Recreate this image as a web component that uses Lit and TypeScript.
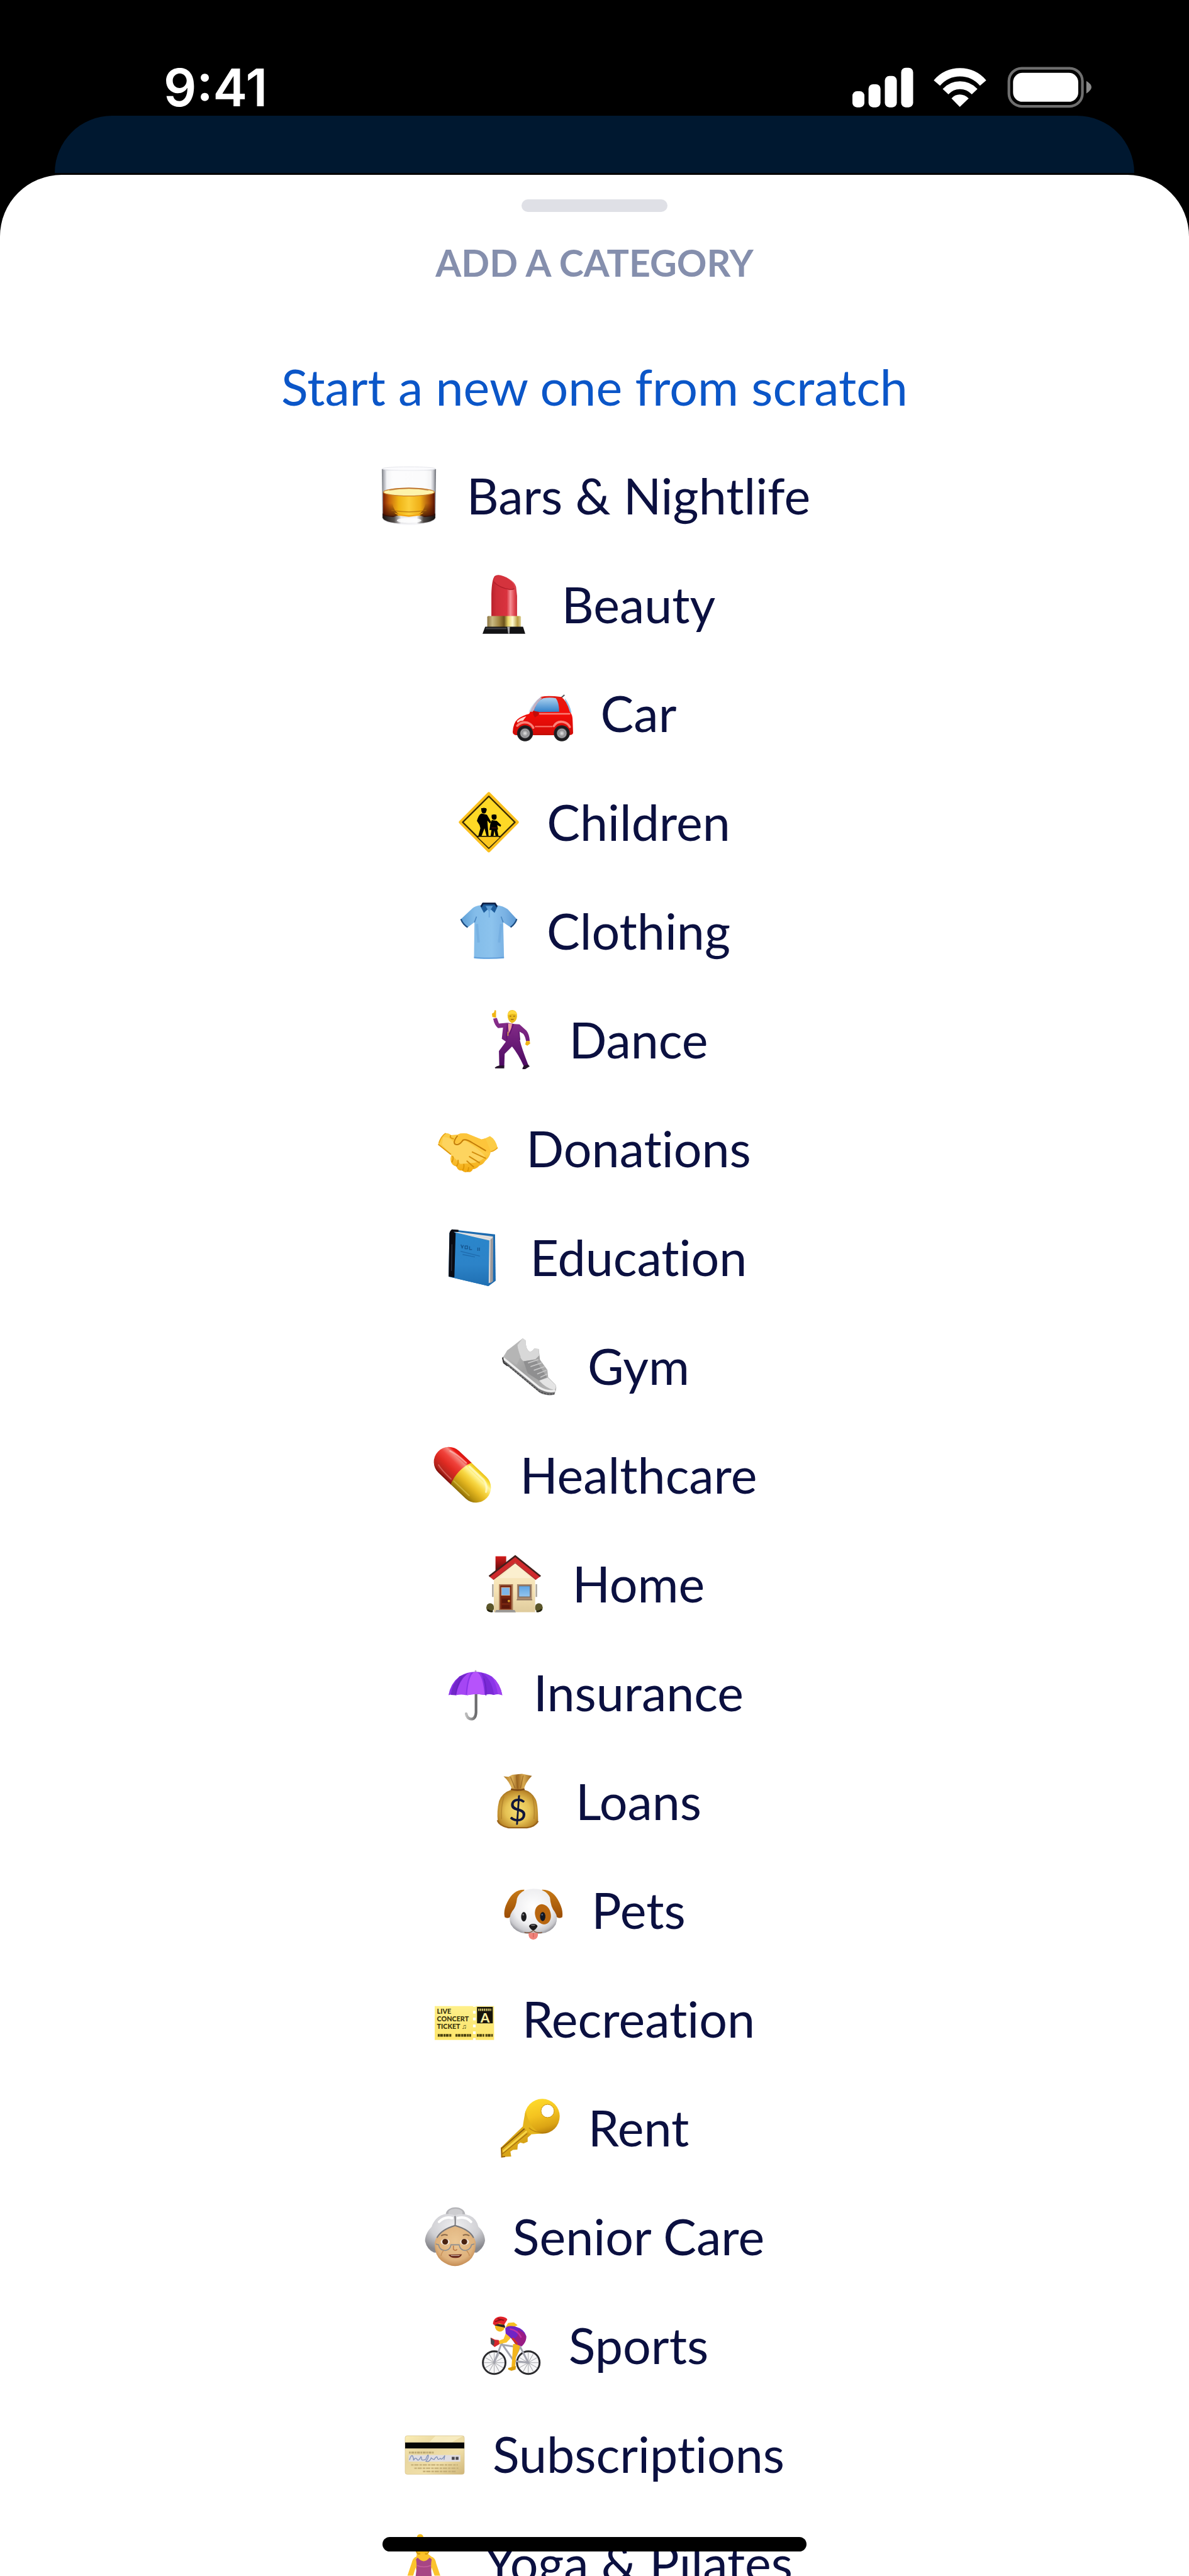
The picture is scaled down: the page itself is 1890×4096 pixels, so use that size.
import { LitElement, html, svg, css, TemplateResult } from "lit";
import { customElement } from "lit/decorators.js";

interface Category {
  name: string;
  view: string;
  art: TemplateResult;
}

const glass = svg`
  <defs>
    <linearGradient id="g-side"><stop offset="0" stop-color="#7d8086"/><stop offset=".07" stop-color="#d9dadf"/><stop offset=".2" stop-color="#f6f6f9"/><stop offset=".8" stop-color="#f3f3f6"/><stop offset=".94" stop-color="#d4d5da"/><stop offset="1" stop-color="#6b6e75"/></linearGradient>
    <linearGradient id="g-liq"><stop offset="0" stop-color="#7d1f04"/><stop offset=".12" stop-color="#c9660c"/><stop offset=".3" stop-color="#efb415"/><stop offset=".5" stop-color="#fccf3b"/><stop offset=".72" stop-color="#efae17"/><stop offset=".9" stop-color="#a44a0a"/><stop offset="1" stop-color="#5a1203"/></linearGradient>
    <linearGradient id="g-dark" x1="0" y1="0" x2="0" y2="1"><stop offset="0" stop-color="#3a0a00" stop-opacity="0"/><stop offset="1" stop-color="#3a0a00" stop-opacity=".85"/></linearGradient>
    <linearGradient id="g-base"><stop offset="0" stop-color="#1b1412"/><stop offset=".22" stop-color="#55504f"/><stop offset=".35" stop-color="#e8e8ea"/><stop offset=".65" stop-color="#f4f4f6"/><stop offset=".78" stop-color="#4c4745"/><stop offset="1" stop-color="#15100f"/></linearGradient>
  </defs>
  <path d="M73 84Q205 62 337 84L334 322Q322 356 205 356T76 322Z" fill="url(#g-side)"/>
  <ellipse cx="205" cy="82" rx="130" ry="9" fill="#fbfbfd" stroke="#e3e4ea" stroke-width="3"/>
  <rect x="95" y="92" width="220" height="90" fill="#fff" opacity=".65"/>
  <path d="M77 300H333V322Q318 350 205 352 92 350 77 322Z" fill="url(#g-base)"/>
  <path d="M79 196H331V300Q320 312 270 312H140Q90 312 79 300Z" fill="url(#g-liq)"/>
  <path d="M79 250H125Q130 290 160 306L128 318 79 312Z" fill="url(#g-dark)"/>
  <path d="M331 250H285Q280 290 250 306L282 318 331 312Z" fill="url(#g-dark)"/>
  <path d="M120 285Q205 300 290 285" fill="none" stroke="#b06a08" stroke-width="5" opacity=".7"/>
  <path d="M134 296Q205 322 276 296 262 314 205 316 148 314 134 296Z" fill="#f3a313"/>
  <ellipse cx="205" cy="196" rx="124" ry="19" fill="#fdf3ab" stroke="#c77c28" stroke-width="4"/>
  <path d="M110 186Q205 168 300 186" fill="none" stroke="#b4672a" stroke-width="6" opacity=".6"/>
  <ellipse cx="206" cy="334" rx="60" ry="12" fill="#fff" opacity=".8"/>`;

const lipstick = svg`
  <defs>
    <linearGradient id="l-red"><stop offset="0" stop-color="#b8222c"/><stop offset=".2" stop-color="#ce2e38"/><stop offset=".6" stop-color="#d9323e"/><stop offset=".74" stop-color="#f58f95"/><stop offset=".88" stop-color="#e24d56"/><stop offset="1" stop-color="#c62a36"/></linearGradient>
    <linearGradient id="l-gold"><stop offset="0" stop-color="#8a7442"/><stop offset=".15" stop-color="#c9ba82"/><stop offset=".35" stop-color="#a08540"/><stop offset=".5" stop-color="#6b521b"/><stop offset=".62" stop-color="#ecd96c"/><stop offset=".75" stop-color="#fffbd0"/><stop offset=".9" stop-color="#b79a3e"/><stop offset="1" stop-color="#dccf95"/></linearGradient>
  </defs>
  <path d="M602 800V690Q604 620 618 603 640 588 690 618 715 632 722 655L727 700V800Z" fill="url(#l-red)"/>
  <path d="M616 610Q640 590 690 620 712 634 714 658 712 672 690 671 635 655 614 625Z" fill="#d5333d"/>
  <path d="M616 634Q640 660 690 668 706 670 714 664" fill="none" stroke="#b21f2a" stroke-width="4"/>
  <rect x="582" y="798" width="164" height="56" rx="5" fill="url(#l-gold)"/>
  <path d="M572 850H756L767 884H559Z" fill="#121214"/>
  <path d="M576 854H676V862H572Z" fill="#3c3d42"/><path d="M679 850L692 850 690 884H684Z" fill="#a7a7aa"/>`;

const car = svg`
  <defs>
    <linearGradient id="c-red" x1="0" y1="0" x2="0" y2="1"><stop offset="0" stop-color="#e21c14"/><stop offset=".45" stop-color="#f30c08"/><stop offset="1" stop-color="#cf0c08"/></linearGradient>
    <linearGradient id="c-win" x1="0" y1="0" x2="0" y2="1"><stop offset="0" stop-color="#aed3ef"/><stop offset="1" stop-color="#2f7fc9"/></linearGradient>
    <radialGradient id="c-hub"><stop offset="0" stop-color="#e6e6e6"/><stop offset=".4" stop-color="#8e8e90"/><stop offset=".62" stop-color="#4a4a4c"/><stop offset=".7" stop-color="#17171a"/><stop offset="1" stop-color="#232326"/></radialGradient>
  </defs>
  <path d="M934 1194L950 1180" stroke="#55555a" stroke-width="6"/>
  <path d="M952 1196Q976 1226 984 1266L960 1268Z" fill="#8fc0e8"/>
  <path d="M698 1360Q700 1316 722 1298 745 1280 778 1272 800 1215 836 1189 870 1182 935 1190 962 1210 976 1262 990 1274 990 1310L992 1366Q988 1376 970 1376H715Q698 1374 698 1360Z" fill="url(#c-red)"/>
  <path d="M800 1256Q818 1206 846 1196 880 1190 908 1196 924 1216 924 1262L815 1264Z" fill="url(#c-win)"/>
  <path d="M776 1262Q795 1220 832 1192L842 1194Q812 1220 798 1262Z" fill="#b9d8ef" opacity=".8"/>
  <path d="M830 1272H975" stroke="#fb8a80" stroke-width="8" stroke-linecap="round" opacity=".9"/>
  <path d="M718 1308Q735 1290 764 1284L748 1306Q735 1304 722 1316Z" fill="#ffd9cf"/>
  <path d="M720 1330Q742 1308 772 1316 792 1324 798 1340M898 1332Q914 1306 944 1312 968 1318 976 1336" fill="none" stroke="#fb8178" stroke-width="11" stroke-linecap="round"/>
  <path d="M806 1334H892" stroke="#f7675f" stroke-width="7"/>
  <path d="M806 1372H888" stroke="#c21008" stroke-width="6"/>
  <path d="M796 1258L824 1262 822 1280 806 1290 798 1276Z" fill="#c30c0a"/>
  <circle cx="758" cy="1367" r="39" fill="url(#c-hub)"/><circle cx="937" cy="1367" r="39" fill="url(#c-hub)"/>
  <circle cx="758" cy="1367" r="20" fill="none" stroke="#a5a5a8" stroke-width="5"/><circle cx="937" cy="1367" r="20" fill="none" stroke="#a5a5a8" stroke-width="5"/>`;

const crossing = svg`
  <defs><linearGradient id="s-y" x1="0" y1="0" x2="0" y2="1"><stop offset="0" stop-color="#fbc621"/><stop offset="1" stop-color="#fcb91a"/></linearGradient></defs>
  <path d="M257 66L396 206 257 346 118 206Z" fill="url(#s-y)" stroke="#fbc01d" stroke-width="14" stroke-linejoin="round"/>
  <path d="M257 80L384 206 257 333 130 206Z" fill="#fed926" stroke="#3a2c06" stroke-width="7" stroke-linejoin="round"/>
  <path d="M205 280H310L257 330Z" fill="#fbc61f"/>
  <ellipse cx="233" cy="150" rx="12" ry="14"/><path d="M220 138H244L248 148H220Z"/>
  <path d="M222 164Q208 168 199 200L212 220 216 236 206 272H222L236 236 246 272H256L252 228 250 198 262 212 268 204 248 170Z"/>
  <ellipse cx="283" cy="181" rx="12" ry="13"/><path d="M271 170H294V182H271Z"/>
  <path d="M272 196Q264 206 262 232L260 244H270L266 272H280L284 246 290 272H304L298 244 302 240 298 220 314 228 317 220 296 200Z"/>
  <path d="M200 275H312" stroke="#1c1503" stroke-width="6"/>
  <path d="M270 234H296" stroke="#c32f14" stroke-width="3" opacity=".5"/>`;

const shirt = svg`
  <defs><linearGradient id="t-b"><stop offset="0" stop-color="#5e9fd6"/><stop offset=".25" stop-color="#83bce9"/><stop offset=".55" stop-color="#8cc3ed"/><stop offset=".8" stop-color="#79b1e3"/><stop offset="1" stop-color="#5b98d3"/></linearGradient></defs>
  <path d="M212 608Q185 612 172 622L114 676Q124 702 147 716L180 692 178 868Q250 874 324 868L320 692 356 716Q378 700 386 676L342 628Q320 612 290 608 250 630 212 608Z" fill="url(#t-b)"/>
  <path d="M114 676Q124 702 147 716M386 676Q378 700 356 716" fill="none" stroke="#1d4c80" stroke-width="7"/>
  <path d="M180 692L190 664M320 692L310 664" stroke="#4a86c0" stroke-width="5" fill="none"/>
  <path d="M192 700L200 790M310 700L300 790" stroke="#6ca7dc" stroke-width="12" opacity=".5"/>
  <path d="M178 862Q250 870 324 862" stroke="#5a97d8" stroke-width="4" fill="none"/>
  <path d="M218 598H282L292 616 278 646 252 622 226 646 210 616Z" fill="#1d5c9b"/>
  <path d="M212 616L222 600H280L290 616" fill="none" stroke="#0c1e45" stroke-width="8"/>
  <path d="M234 612H270L252 642Z" fill="#5d9bd2"/><path d="M252 628V668" stroke="#6aa6dc" stroke-width="5"/>`;

const dancer = svg`
  <defs><linearGradient id="d-s" x1="0" y1="0" x2="0" y2="1"><stop offset="0" stop-color="#8b2f8d"/><stop offset="1" stop-color="#4c0a62"/></linearGradient></defs>
  <path d="M270 1150L268 1134 278 1128 282 1116 288 1118 288 1154Z" fill="#f0b414"/>
  <path d="M274 1158L292 1154 302 1182 344 1178 378 1184 402 1186 436 1216 Q450 1234 452 1266L434 1268Q430 1244 420 1232L400 1220 404 1262 Q412 1300 446 1386L424 1392Q396 1330 366 1294 L330 1330 328 1390H304L302 1316 336 1270 316 1256 322 1202 298 1204Q280 1190 274 1158Z" fill="url(#d-s)"/>
  <path d="M346 1182L366 1182 362 1206 350 1230Z" fill="#f1a3a0"/>
  <path d="M344 1184L338 1240 342 1262M372 1186L354 1234" stroke="#641370" stroke-width="5" fill="none"/>
  <path d="M346 1222V1242" stroke="#e3b93a" stroke-width="4"/>
  <path d="M400 1220L404 1262" stroke="#561068" stroke-width="4"/>
  <path d="M344 1140Q346 1116 368 1116 392 1118 390 1148 388 1172 366 1180 344 1172 344 1140Z" fill="#eabb1c"/>
  <path d="M346 1136Q352 1116 374 1118 390 1124 390 1140 370 1128 346 1142Z" fill="#ffd93f"/>
  <path d="M354 1146H362M372 1146H380M360 1162H374" stroke="#9c6a0b" stroke-width="4"/>
  <path d="M434 1268L452 1266 454 1280 440 1290 430 1284Z" fill="#f0b414"/>
  <path d="M282 1396Q290 1388 304 1386H328V1400H284ZM418 1396L424 1386 444 1382 452 1390 430 1404 416 1404Z" fill="#24122b"/>`;

const handshake = svg`
  <defs><linearGradient id="h-y" x1="0" y1="0" x2="0" y2="1"><stop offset="0" stop-color="#fbcc45"/><stop offset=".5" stop-color="#fccb45"/><stop offset="1" stop-color="#f2a90f"/></linearGradient></defs>
  <path d="M71 204Q78 168 108 150 124 150 134 160L164 158Q182 148 212 152L282 180Q302 176 324 164 352 180 361 222 350 236 328 240 322 268 300 286 290 302 272 308 258 324 240 326 232 344 214 338 200 344 188 332 168 334 160 312 140 308 134 290 128 270 136 256 112 234 71 204Z" fill="url(#h-y)"/>
  <path d="M134 160L164 158Q182 148 212 152L282 180 302 176 328 240Q322 250 312 246 260 214 198 186 180 208 154 204 148 190 170 166Z" fill="#fdc53b"/>
  <path d="M96 170Q130 166 150 200 190 200 200 184 270 226 300 262 286 284 250 294L180 300 136 256 90 206Z" fill="#fdd45f"/>
  <path d="M166 162Q144 190 152 202 172 214 192 184 206 176 240 198L304 236" fill="none" stroke="#c27b08" stroke-width="6"/>
  <path d="M134 160Q122 172 148 178M72 204L134 254" fill="none" stroke="#e09a10" stroke-width="6"/>
  <path d="M238 242L302 272M224 264L272 294M212 286L244 314" stroke="#d18c0c" stroke-width="6" stroke-linecap="round"/>
  <path d="M140 262Q150 268 138 292M168 280Q172 298 160 312M196 300Q200 316 190 332M220 316Q220 328 214 338" fill="none" stroke="#dd9708" stroke-width="6"/>
  <path d="M108 150Q86 164 76 198M328 240Q350 234 361 220" fill="none" stroke="#e9a313" stroke-width="5"/>`;

const book = svg`
  <defs><linearGradient id="b-b" x1="0" y1="0" x2="0" y2="1"><stop offset="0" stop-color="#2a86cb"/><stop offset=".6" stop-color="#2c83c8"/><stop offset="1" stop-color="#1f6fb2"/></linearGradient></defs>
  <path d="M128 618L338 642 341 868 306 894 112 848 116 634Z" fill="#1c6bb0"/>
  <path d="M140 628L328 652 326 872 306 880V676L138 640Z" fill="#d5d3d3"/>
  <path d="M316 668L328 656V870L314 880Z" fill="#9d999a"/>
  <path d="M150 632L322 658M146 637L316 666" stroke="#f2f1f0" stroke-width="3"/>
  <path d="M134 630L310 672 306 894 130 852Z" fill="url(#b-b)"/>
  <path d="M116 636Q122 616 134 618L160 620V630H136L146 636 140 852 112 847Z" fill="#0a0b12"/>
  <path d="M128 690L126 820" stroke="#3d4452" stroke-width="3"/>
  <path d="M172 692L178 708 184 694M192 698H204V712H192ZM214 700V716H226M254 706V722M262 706V722" fill="none" stroke="#16558f" stroke-width="4"/>
  <path d="M170 724L264 748M180 740L240 752" stroke="#1f6aac" stroke-width="4"/>`;

const shoe = svg`
  <defs><linearGradient id="n-g" x1="0" y1="0" x2="1" y2="1"><stop offset="0" stop-color="#c9c9c9"/><stop offset=".5" stop-color="#a1a1a1"/><stop offset="1" stop-color="#b8b8b8"/></linearGradient></defs>
  <path d="M388 1238Q384 1252 394 1266L570 1412Q610 1430 640 1420L648 1396 600 1400 400 1232Z" fill="#777778"/>
  <path d="M390 1238L410 1206 486 1146 500 1156Q500 1200 520 1212 536 1208 542 1196L564 1198 570 1250 606 1300 610 1336 646 1372Q654 1388 644 1404 600 1410 560 1384Z" fill="url(#n-g)"/>
  <path d="M486 1146L500 1156Q500 1200 520 1212 536 1208 542 1196L564 1198 566 1230 548 1248 490 1258Q466 1240 460 1180Z" fill="#d8d8d8"/>
  <path d="M410 1206L458 1172Q462 1200 476 1236L456 1276 400 1232Z" fill="#b5b5b5"/>
  <path d="M490 1258L548 1250 604 1336 566 1352 510 1316Z" fill="#8f8f90"/>
  <path d="M512 1266L562 1250M524 1284L578 1266M540 1302L592 1284M556 1320L602 1302M572 1336L606 1320" stroke="#c9c9c9" stroke-width="5"/>
  <path d="M566 1352L608 1338 646 1374Q650 1390 640 1398 600 1390 566 1352Z" fill="#e4e4e4"/>
  <path d="M392 1244L566 1386Q604 1410 644 1402" fill="none" stroke="#efefef" stroke-width="11"/>
  <path d="M390 1258L566 1404Q600 1424 640 1416" fill="none" stroke="#4e4e50" stroke-width="6" stroke-dasharray="9 6"/>
  <path d="M388 1240L394 1266 412 1280" fill="none" stroke="#38383a" stroke-width="6"/>`;

const pill = svg`
  <defs>
    <linearGradient id="p-r" x1="0" y1="1" x2="0" y2="0"><stop offset="0" stop-color="#7a0d08"/><stop offset=".12" stop-color="#b1241c"/><stop offset=".4" stop-color="#e02a22"/><stop offset=".62" stop-color="#f0423b"/><stop offset=".8" stop-color="#f4887f"/><stop offset=".9" stop-color="#ef1b16"/><stop offset="1" stop-color="#d21612"/></linearGradient>
    <linearGradient id="p-y" x1="0" y1="1" x2="0" y2="0"><stop offset="0" stop-color="#8a6a0a"/><stop offset=".15" stop-color="#b8920f"/><stop offset=".4" stop-color="#e6b921"/><stop offset=".6" stop-color="#f8d844"/><stop offset=".78" stop-color="#fff59b"/><stop offset=".9" stop-color="#f9df3a"/><stop offset="1" stop-color="#e9bd18"/></linearGradient>
  </defs>
  <g transform="rotate(43.5 231 219)">
    <path d="M140 146H225V292H140A73 73 0 0 1 140 146Z" fill="url(#p-r)"/>
    <path d="M222 146H322A73 73 0 0 1 322 292H222Q194 219 222 146Z" fill="url(#p-y)"/>
    <path d="M108 176Q140 164 205 164" stroke="#ffc5bf" stroke-width="7" fill="none" stroke-linecap="round" opacity=".65"/>
    <path d="M228 166H324Q356 172 372 200" stroke="#fffbcf" stroke-width="10" fill="none" stroke-linecap="round" opacity=".75"/>
    <path d="M114 264Q140 272 205 272" stroke="#f4a79d" stroke-width="6" fill="none" stroke-linecap="round" opacity=".45"/>
    <path d="M222 270H324" stroke="#f1e07c" stroke-width="6" fill="none" stroke-linecap="round" opacity=".4"/>
  </g>`;

const house = svg`
  <defs>
    <linearGradient id="o-w" x1="0" y1="0" x2="0" y2="1"><stop offset="0" stop-color="#f9eac6"/><stop offset=".6" stop-color="#f5e2b4"/><stop offset="1" stop-color="#dfcb9c"/></linearGradient>
    <linearGradient id="o-c" x1="0" y1="0" x2="0" y2="1"><stop offset="0" stop-color="#d31b1b"/><stop offset="1" stop-color="#5d0c0c"/></linearGradient>
    <linearGradient id="o-g" x1="0" y1="0" x2="0" y2="1"><stop offset="0" stop-color="#5ea4e3"/><stop offset="1" stop-color="#95c5ef"/></linearGradient>
  </defs>
  <ellipse cx="389" cy="864" rx="19" ry="21" fill="#5b562a"/><ellipse cx="626" cy="864" rx="19" ry="21" fill="#5b562a"/>
  <path d="M376 874Q388 886 402 882M614 882Q630 886 640 872" stroke="#25230e" stroke-width="8" fill="none"/>
  <path d="M402 750V812M614 750V812" stroke="#a7a197" stroke-width="7"/>
  <rect x="415" y="614" width="52" height="70" fill="url(#o-c)"/>
  <path d="M407 886V704L511 626 608 704V886Z" fill="url(#o-w)"/>
  <path d="M432 720L511 650 590 720Z" fill="#fbefcf"/>
  <path d="M384 712L511 614 634 712 612 728 511 644 404 728Z" fill="#cf2a2c"/>
  <path d="M384 712L511 613 634 712" fill="none" stroke="#42201c" stroke-width="8"/>
  <path d="M404 728L511 646 612 728" fill="none" stroke="#a3282a" stroke-width="4"/>
  <rect x="432" y="750" width="68" height="126" fill="#a87754"/><rect x="438" y="756" width="54" height="116" fill="#76240f"/>
  <rect x="444" y="766" width="40" height="38" fill="#7db5e8" stroke="#d9b698" stroke-width="3"/>
  <path d="M446 820H484V842H446ZM446 852H484V868H446Z" fill="#5c180a"/><circle cx="480" cy="832" r="6" fill="#d59a2b"/>
  <path d="M418 876H508L514 887H412Z" fill="#9a9896"/>
  <rect x="520" y="750" width="72" height="74" fill="#a98a70"/><rect x="528" y="758" width="56" height="54" fill="url(#o-g)" stroke="#7c6758" stroke-width="4"/>
  <path d="M518 826H594" stroke="#8c7460" stroke-width="5"/>`;

const umbrella = svg`
  <defs><linearGradient id="u-h"><stop offset="0" stop-color="#bdbdbd"/><stop offset="1" stop-color="#6a6a6c"/></linearGradient></defs>
  <path d="M312 1280V1372Q310 1404 288 1404 268 1402 264 1378" fill="none" stroke="url(#u-h)" stroke-width="13" stroke-linecap="round"/>
  <path d="M310 1166V1180" stroke="#b7b4bd" stroke-width="8"/>
  <path d="M178 1288Q188 1230 232 1196 268 1174 310 1174 352 1174 388 1196 430 1230 440 1288 422 1280 400 1286 376 1280 354 1286 310 1278 268 1288 240 1280 214 1288 194 1282 178 1288Z" fill="#8b35e8"/>
  <path d="M310 1174Q276 1178 268 1288 310 1278 354 1286 344 1178 310 1174Z" fill="#b653fb"/>
  <path d="M290 1176Q236 1190 214 1288 240 1280 262 1288 268 1200 290 1176Z" fill="#a546f4"/>
  <path d="M335 1176Q352 1210 356 1286L376 1281 400 1286Q388 1204 335 1176Z" fill="#7a2ad6"/>
  <path d="M232 1196Q192 1238 190 1286L214 1288Q226 1220 270 1182Z" fill="#7227c9"/>
  <path d="M388 1196Q412 1232 418 1282L440 1288Q430 1230 388 1196Z" fill="#a042f0"/>
  <path d="M244 1200Q218 1236 214 1284M360 1290Q364 1240 350 1206" stroke="#6520bd" stroke-width="5" fill="none" opacity=".7"/>`;

const moneyBag = svg`
  <defs>
    <radialGradient id="m-b" cx=".5" cy=".55" r=".6"><stop offset="0" stop-color="#f6df72"/><stop offset=".5" stop-color="#e6c254"/><stop offset=".85" stop-color="#bd8a2b"/><stop offset="1" stop-color="#91611a"/></radialGradient>
    <linearGradient id="m-t"><stop offset="0" stop-color="#b27b26"/><stop offset=".3" stop-color="#dcb058"/><stop offset=".5" stop-color="#a06a22"/><stop offset=".7" stop-color="#d8a94f"/><stop offset="1" stop-color="#9a6722"/></linearGradient>
  </defs>
  <path d="M438 92L462 94 480 84 504 82 528 80 550 84 576 90Q544 122 536 158H480Q466 116 438 92Z" fill="url(#m-t)"/>
  <path d="M472 96L494 150M500 88L506 150M534 88L520 150" stroke="#8e5b1c" stroke-width="4" opacity=".7"/>
  <path d="M478 156Q430 172 416 212 404 260 410 312 420 334 462 344H552Q594 338 606 312 606 220 592 200 574 166 536 156Z" fill="url(#m-b)"/>
  <path d="M408 306Q416 332 462 342H552Q592 336 606 310" fill="none" stroke="#99631a" stroke-width="7"/>
  <path d="M474 154Q506 164 540 154" fill="none" stroke="#7d4a14" stroke-width="8"/>
  <path d="M440 190Q424 240 428 300M578 190Q592 240 586 300" stroke="#a97a25" stroke-width="5" fill="none" opacity=".6"/>
  <text x="507" y="312" text-anchor="middle" font-family="Lato, sans-serif" font-size="156" fill="#10163a">$</text>`;

const dog = svg`
  <defs>
    <radialGradient id="k-f" cx=".5" cy=".4" r=".62"><stop offset="0" stop-color="#fff"/><stop offset=".65" stop-color="#eeeef0"/><stop offset=".9" stop-color="#c9c9cd"/><stop offset="1" stop-color="#9c9ca2"/></radialGradient>
    <linearGradient id="k-e" x1="0" y1="0" x2="0" y2="1"><stop offset="0" stop-color="#c77a17"/><stop offset="1" stop-color="#9a4c05"/></linearGradient>
  </defs>
  <path d="M560 642Q506 640 476 704 456 744 464 776 488 788 502 762L534 700Z" fill="url(#k-e)"/>
  <path d="M645 642Q700 640 730 704 750 744 744 776 720 788 706 762L672 700Z" fill="url(#k-e)"/>
  <path d="M603 638Q664 638 684 680 688 728 708 750 726 776 712 812 690 850 640 856 603 860 566 856 516 850 494 812 480 776 500 748 520 726 524 684 542 640 603 638Z" fill="url(#k-f)"/>
  <ellipse cx="650" cy="762" rx="38" ry="50" transform="rotate(-16 650 762)" fill="#b8660f"/>
  <ellipse cx="557" cy="774" rx="13" ry="23" fill="#1d1d1f"/><ellipse cx="649" cy="773" rx="13" ry="22" fill="#131722"/>
  <circle cx="554" cy="764" r="4" fill="#8f8f92"/><circle cx="646" cy="764" r="4" fill="#5c6e8c"/>
  <path d="M580 852H626Q628 884 603 886 578 884 580 852Z" fill="#f08279"/><path d="M603 852V874" stroke="#d4605a" stroke-width="4"/>
  <path d="M560 850Q590 856 603 840 616 856 646 850" fill="none" stroke="#85614b" stroke-width="5"/>
  <path d="M582 820Q586 808 603 808 620 808 624 820 616 838 603 840 590 838 582 820Z" fill="#1c1a1b"/><ellipse cx="602" cy="815" rx="10" ry="3" fill="#77777a"/>`;

const ticket = svg`
  <defs><linearGradient id="r-y" x1="0" y1="0" x2="0" y2="1"><stop offset="0" stop-color="#fff08a"/><stop offset=".5" stop-color="#fbe878"/><stop offset="1" stop-color="#ffe76c"/></linearGradient></defs>
  <rect x="103" y="1206" width="289" height="165" fill="url(#r-y)"/>
  <path d="M296 1206V1371" stroke="#fff" stroke-width="13" stroke-dasharray="13 20" stroke-dashoffset="-24"/>
  <g font-family="Lato, sans-serif" font-weight="900" fill="#3b350f">
    <text x="114" y="1242" font-size="33">LIVE</text>
    <text x="114" y="1280" font-size="33">CONCERT</text>
    <text x="114" y="1317" font-size="33">TICKET ♫</text>
  </g>
  <path d="M118 1349H186M204 1349H280M308 1349H344M350 1349H386" stroke="#4a410e" stroke-width="13" stroke-dasharray="9 2 14 3"/>
  <rect x="309" y="1210" width="77" height="80" fill="#17140a"/>
  <path d="M315 1224H380" stroke="#d9cb6c" stroke-width="11" stroke-dasharray="6 3"/>
  <text x="348" y="1287" text-anchor="middle" font-family="Lato, sans-serif" font-weight="900" font-size="64" fill="#fdf0a0">A</text>`;

const key = svg`
  <defs>
    <linearGradient id="y-b" x1=".3" y1="0" x2=".6" y2="1"><stop offset="0" stop-color="#fedb2c"/><stop offset=".45" stop-color="#f4c320"/><stop offset=".8" stop-color="#dba414"/><stop offset="1" stop-color="#b87f0b"/></linearGradient>
    <linearGradient id="y-s" x1="0" y1="0" x2="1" y2="1"><stop offset="0" stop-color="#e0b01c"/><stop offset="1" stop-color="#d29c14"/></linearGradient>
  </defs>
  <path d="M612 226L650 268 632 284 632 304 612 312 596 308 584 318 582 342 560 344 548 352 552 376 506 378 502 332Z" fill="url(#y-s)"/>
  <path d="M506 336L622 236" stroke="#8e5f0c" stroke-width="6"/><path d="M512 352L628 252" stroke="#f7d545" stroke-width="9"/>
  <path d="M508 364L630 264" stroke="#a97410" stroke-width="4"/>
  <path d="M504 332L506 378 522 376" fill="none" stroke="#9b640b" stroke-width="6"/>
  <circle cx="703" cy="180" r="85" fill="url(#y-b)"/>
  <path d="M622 152Q612 200 608 232L646 268 700 264Q640 240 622 152Z" fill="#e5b51c"/>
  <path d="M638 236Q670 266 730 258" fill="none" stroke="#b07a0c" stroke-width="5" opacity=".7"/>
  <circle cx="729" cy="154" r="32" fill="#fff" stroke="#c8920f" stroke-width="3"/>`;

const grandma = svg`
  <defs>
    <radialGradient id="a-f" cx=".5" cy=".4" r=".65"><stop offset="0" stop-color="#ebc794"/><stop offset=".7" stop-color="#dfb27d"/><stop offset="1" stop-color="#bb7e45"/></radialGradient>
    <radialGradient id="a-h" cx=".5" cy=".3" r=".7"><stop offset="0" stop-color="#efeff1"/><stop offset=".6" stop-color="#cfcfd3"/><stop offset="1" stop-color="#88888d"/></radialGradient>
  </defs>
  <ellipse cx="260" cy="656" rx="47" ry="35" fill="#b3b3b7"/><ellipse cx="260" cy="648" rx="35" ry="20" fill="#cdcdd0"/>
  <path d="M258 660Q200 640 164 680 148 700 144 716 112 748 112 786 122 828 156 842L364 842Q398 820 404 784 402 744 372 716 362 676 330 662 290 646 258 660Z" fill="url(#a-h)"/>
  <path d="M160 790Q170 734 258 708 346 734 358 790 362 850 326 882 290 908 258 908 226 908 192 882 154 850 160 790Z" fill="url(#a-f)"/>
  <path d="M258 664Q260 700 258 710 190 730 170 770" fill="none" stroke="#77777b" stroke-width="6"/><path d="M258 710Q330 730 348 770" fill="none" stroke="#77777b" stroke-width="6"/>
  <path d="M180 692Q210 664 244 674M272 674Q310 664 336 692" fill="none" stroke="#fff" stroke-width="12" stroke-linecap="round"/>
  <path d="M190 760Q204 750 222 758M296 758Q314 750 328 760" fill="none" stroke="#8a6a4a" stroke-width="6"/>
  <ellipse cx="210" cy="790" rx="22" ry="15" fill="#f4e8dc"/><ellipse cx="304" cy="790" rx="22" ry="15" fill="#f4e8dc"/>
  <circle cx="210" cy="789" r="14" fill="#4a2310"/><circle cx="303" cy="789" r="14" fill="#4a2310"/>
  <path d="M164 800L178 804Q182 830 210 832 236 828 238 804H278Q282 830 308 832 334 828 338 804L352 800" fill="none" stroke="#8c8d90" stroke-width="5"/>
  <path d="M250 808V826Q258 836 268 826" fill="none" stroke="#bd7d4b" stroke-width="5"/>
  <path d="M226 852Q258 850 292 850 284 870 258 868 234 868 226 852Z" fill="#6b2b1e"/><path d="M238 856H280" stroke="#e6d6c8" stroke-width="3"/>
  <path d="M204 830Q192 842 190 858M314 832Q326 844 328 858" fill="none" stroke="#c68e56" stroke-width="4"/>`;

const spokes = (cx: number, cy: number) => [0, 30, 60, 90, 120, 150].map(
  (a) => svg`<path d="M${cx - 50} ${cy}H${cx + 50}" transform="rotate(${a} ${cx} ${cy})" stroke="#a5a6aa" stroke-width="3"/>`
);

const cyclist = svg`
  <g fill="#f6f6f7" stroke="#2a2a2d" stroke-width="9"><circle cx="464" cy="1378" r="55"/><circle cx="630" cy="1378" r="55"/></g>
  ${spokes(464, 1378)}${spokes(630, 1378)}
  <path d="M464 1378L500 1284 560 1370 630 1378 590 1300 556 1374M496 1290L590 1304" fill="none" stroke="#a3a4ae" stroke-width="9"/>
  <path d="M556 1288L592 1284 584 1320 570 1350 566 1400 548 1404 552 1350Z" fill="#f3b51b"/>
  <path d="M532 1404L570 1394 568 1412 548 1418 532 1412Z" fill="#d99c0c"/>
  <path d="M524 1226L552 1250 524 1280 490 1288 484 1272 510 1262Z" fill="#fac32a"/>
  <path d="M532 1184L560 1182 578 1196 556 1206 520 1204Z" fill="#f6bf22"/>
  <path d="M518 1210Q530 1194 566 1202 610 1214 620 1248 622 1276 598 1298L566 1286Q552 1260 520 1236Z" fill="#7024c4"/>
  <path d="M578 1218Q612 1228 620 1252 620 1280 598 1298L566 1286 550 1262Q586 1260 578 1218Z" fill="#9a1c84"/>
  <path d="M540 1214Q578 1220 596 1256" fill="none" stroke="#c331a6" stroke-width="7"/>
  <path d="M552 1258L576 1288" stroke="#d5321c" stroke-width="9"/>
  <ellipse cx="492" cy="1202" rx="24" ry="25" fill="#f2b71c"/>
  <path d="M458 1190Q460 1156 496 1154 522 1156 528 1168L512 1194 488 1186 470 1198Z" fill="#e2232a"/>
  <path d="M468 1178L502 1168M480 1164L512 1172" stroke="#8e0f16" stroke-width="6"/>
  <path d="M464 1196L484 1190 514 1194 518 1208 500 1204Z" fill="#252028"/>
  <path d="M448 1256L468 1266 486 1268 490 1288 466 1302 450 1288Z" fill="#d8262c"/><path d="M446 1256L466 1272 462 1296 448 1286Z" fill="#4a4a50"/>`;

const card = svg`
  <defs><linearGradient id="v-c" x1="0" y1="0" x2="1" y2="1"><stop offset="0" stop-color="#fbedb4"/><stop offset=".35" stop-color="#e9d7a0"/><stop offset=".65" stop-color="#f0dfa9"/><stop offset="1" stop-color="#cfb578"/></linearGradient></defs>
  <rect x="3" y="58" width="288" height="188" rx="10" fill="url(#v-c)" stroke="#d4c08a" stroke-width="2"/>
  <path d="M150 60H284L230 90H120Z" fill="#fff7d2" opacity=".6"/>
  <rect x="3" y="91" width="288" height="29" fill="#060606"/>
  <path d="M22 140H142" stroke="#baa671" stroke-width="9" stroke-dasharray="8 3 14 3"/>
  <rect x="20" y="152" width="252" height="32" fill="#dfdde2"/>
  <path d="M24 176Q34 146 40 158T44 178Q54 160 60 172T76 168Q82 150 84 176 96 178 104 172 116 142 116 156T104 182Q120 190 130 166 134 172 144 174 158 152 160 166 162 180 174 168 182 180 196 154L192 176" fill="none" stroke="#8190b5" stroke-width="4"/>
  <path d="M230 168H266" stroke="#4a484c" stroke-width="14" stroke-dasharray="14 5"/>
  <path d="M32 200H260M48 216H262M90 232H250" stroke="#c5af78" stroke-width="7" stroke-dasharray="12 4 20 5"/>`;

const yoga = svg`
  <ellipse cx="116" cy="20" rx="15" ry="12" fill="#f3bd1d"/>
  <path d="M92 90V40Q116 18 158 40V90L140 106H112Z" fill="#f3bd1d"/>
  <path d="M100 100H150L170 116Q190 122 194 150L214 210H186L172 170 164 210H104L94 170 82 210H54L74 150Q80 122 98 116Z" fill="#fbc32c"/>
  <path d="M96 130L104 122Q134 156 162 122L172 130Q166 160 172 212H94Q102 160 96 130Z" fill="#a74684"/>
  <path d="M98 92Q104 108 116 102M158 92Q150 108 140 102" fill="none" stroke="#d29a0c" stroke-width="7"/>
  <path d="M100 160Q134 174 168 160" fill="none" stroke="#c35f9c" stroke-width="5"/>`;

const CATEGORIES: Category[] = [
  { name: "Bars & Nightlife", view: "58 66 294 294", art: glass },
  { name: "Beauty", view: "516 594 294 294", art: lipstick },
  { name: "Car", view: "698 1122 294 294", art: car },
  { name: "Children", view: "110 58 294 294", art: crossing },
  { name: "Clothing", view: "103 586 294 294", art: shirt },
  { name: "Dance", view: "213 1113 294 294", art: dancer },
  { name: "Donations", view: "70 77 294 294", art: handshake },
  { name: "Education", view: "81 606 294 294", art: book },
  { name: "Gym", view: "373 1134 294 294", art: shoe },
  { name: "Healthcare", view: "84 72 294 294", art: pill },
  { name: "Home", view: "361 600 294 294", art: house },
  { name: "Insurance", view: "163 1127 294 294", art: umbrella },
  { name: "Loans", view: "360 66 294 294", art: moneyBag },
  { name: "Pets", view: "457 594 294 294", art: dog },
  { name: "Recreation", view: "100 1121 294 294", art: ticket },
  { name: "Rent", view: "498 88 294 294", art: key },
  { name: "Senior Care", view: "110 616 294 294", art: grandma },
  { name: "Sports", view: "398 1146 294 294", art: cyclist },
  { name: "Subscriptions", view: "0 0 294 294", art: card },
  { name: "Yoga & Pilates", view: "0 0 294 294", art: yoga },
];

@customElement("category-row")
class CategoryRow extends LitElement {
  static properties = { category: { attribute: false } };
  declare category: Category;

  static styles = css`
    :host { display: block; }
    .row {
      display: flex;
      align-items: center;
      justify-content: center;
      gap: 44px;
      width: 100%;
      height: 173px;
      padding: 0;
      border: 0;
      background: none;
      color: #0b1040;
      font: 400 79px/92px Lato, "Open Sans", sans-serif;
      font-variant-ligatures: none;
      white-space: nowrap;
      cursor: pointer;
    }
    .icon { width: 96px; height: 96px; flex: none; overflow: visible; }
  `;

  render() {
    return html`<button class="row" type="button">
      <svg class="icon" viewBox=${this.category.view} aria-hidden="true">${this.category.art}</svg>
      <span>${this.category.name}</span>
    </button>`;
  }
}

@customElement("status-bar")
class StatusBar extends LitElement {
  static styles = css`
    :host { display: block; }
    .bar {
      display: flex;
      justify-content: space-between;
      align-items: flex-end;
      height: 184px;
      box-sizing: border-box;
      padding: 0 155px 12px 260px;
      color: #fff;
    }
    .time { font: 600 82px/64px Inter, "Liberation Sans", sans-serif; }
    .icons { width: 380px; height: 66px; }
  `;

  render() {
    return html`<div class="bar">
      <time class="time">9:41</time>
      <svg class="icons" viewBox="108 86 1158 201" aria-hidden="true">
        <g fill="#fff">
          <rect x="108" y="205" width="58" height="78" rx="22"/>
          <rect x="186" y="171" width="58" height="112" rx="22"/>
          <rect x="265" y="131" width="58" height="152" rx="22"/>
          <rect x="344" y="91" width="58" height="192" rx="22"/>
          <path d="M628 281L588 240Q604 221 628 221T671 240Z"/>
          <rect x="886" y="116" width="316" height="140" rx="46"/>
        </g>
        <path d="M517 165Q562 113 629 113T741 165" fill="none" stroke="#fff" stroke-width="40"/>
        <path d="M559 207Q588 176 629 176T700 207" fill="none" stroke="#fff" stroke-width="38"/>
        <rect x="866" y="94" width="356" height="184" rx="62" fill="none" stroke="#6f6f6f" stroke-width="13"/>
        <path d="M1241 155Q1266 170 1266 185T1241 216Z" fill="#8a8a8a"/>
      </svg>
    </div>`;
  }
}

@customElement("app-root")
class AppRoot extends LitElement {
  static styles = css`
    :host { display: block; }
    .screen {
      position: relative;
      display: flex;
      flex-direction: column;
      height: 100vh;
      overflow: hidden;
      background: #000;
    }
    .behind {
      flex: none;
      height: 91px;
      margin: 0 87px 3px;
      border-radius: 98px 98px 0 0;
      background: #001830;
    }
    .sheet {
      flex: 1;
      min-height: 0;
      display: flex;
      flex-direction: column;
      align-items: center;
      box-sizing: border-box;
      padding-top: 39px;
      border-radius: 98px 98px 0 0;
      background: #fff;
    }
    .grabber { flex: none; width: 232px; height: 20px; border-radius: 10px; background: #dfe0e6; }
    .title {
      margin: 46px 0 75px;
      color: #858fad;
      font: 700 59px/70px Lato, "Open Sans", sans-serif;
    }
    .list { width: 100%; margin: 0; padding: 0; list-style: none; }
    .scratch {
      display: block;
      width: 100%;
      height: 173px;
      padding: 0;
      border: 0;
      background: none;
      color: #0b56c8;
      font: 400 79px/92px Lato, "Open Sans", sans-serif;
      cursor: pointer;
    }
    .home {
      position: absolute;
      bottom: 39px;
      left: 50%;
      width: 674px;
      height: 23px;
      margin-left: -337px;
      border-radius: 12px;
      background: #000;
    }
  `;

  render() {
    return html`<div class="screen">
      <status-bar></status-bar>
      <div class="behind"></div>
      <main class="sheet">
        <div class="grabber"></div>
        <h1 class="title">ADD A CATEGORY</h1>
        <ul class="list">
          <li><button class="scratch" type="button">Start a new one from scratch</button></li>
          ${CATEGORIES.map((c) => html`<li><category-row .category=${c}></category-row></li>`)}
        </ul>
      </main>
      <div class="home"></div>
    </div>`;
  }
}
